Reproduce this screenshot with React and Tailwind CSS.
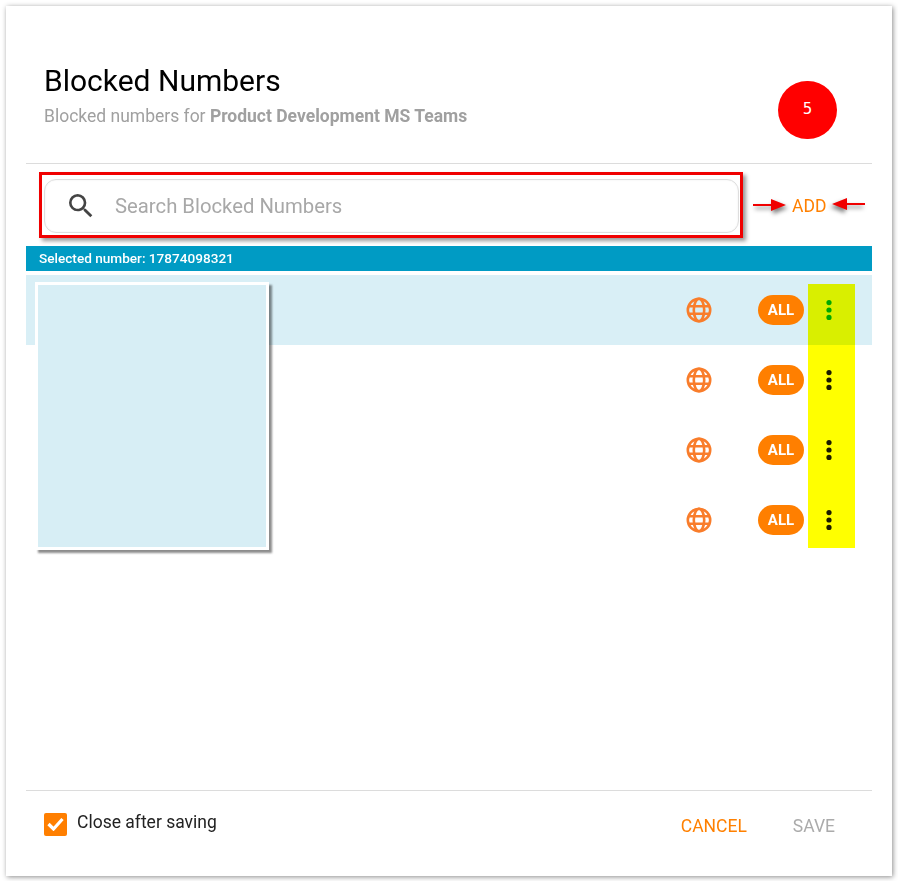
import React from "react";
import { MdSearch } from "react-icons/md";

function Globe() {
  return (
    <svg width="26" height="26" viewBox="0 0 26 26" fill="none" stroke="#F97D2B" strokeWidth="2.6">
      <circle cx="13" cy="13" r="11.2" />
      <ellipse cx="13" cy="13" rx="5.2" ry="11.2" />
      <path d="M2.6 9.2h20.8M2.6 16.8h20.8" />
    </svg>
  );
}

function Dots({ color }) {
  return (
    <svg width="6" height="20" viewBox="0 0 6 20" fill={color}>
      <circle cx="3" cy="2.6" r="2.6" />
      <circle cx="3" cy="10" r="2.6" />
      <circle cx="3" cy="17.4" r="2.6" />
    </svg>
  );
}

function Row({ selected }) {
  return (
    <div className={`flex h-[70px] items-center pl-[660px] ${selected ? "bg-[#D9EFF6]" : ""}`}>
      <div className="flex w-[26px] justify-center"><Globe /></div>
      <div className="ml-[46px] flex h-[30px] w-[46px] items-center justify-center rounded-full bg-[#FF7F00] text-[15px] font-bold text-white">ALL</div>
      <div className="ml-[22px] flex w-[6px] justify-center"><Dots color={selected ? "#00A800" : "#1a1a1a"} /></div>
    </div>
  );
}

function Arrow({ flip, className }) {
  return (
    <svg width="36" height="14" viewBox="0 0 36 14" className={`absolute drop-shadow-[2px_3px_2px_rgba(0,0,0,0.5)] ${className}`} style={flip ? { transform: "scaleX(-1)" } : undefined}>
      <path d="M0 6h18V1L33 7l-15 6V8H0z" fill="#F00000" />
    </svg>
  );
}

export default function App() {
  return (
    <div className="h-[881px] w-[898px] bg-white pl-[6px] pt-[6px] font-['Roboto',sans-serif]">
      <div className="relative flex h-[870px] w-[886px] flex-col bg-white shadow-[1px_1px_5px_rgba(0,0,0,0.45)]">
        <header className="h-[157px] px-[38px] pt-[57px]">
          <h1 className="text-[30px] leading-[36px] text-black">Blocked Numbers</h1>
          <p className="mt-[5px] text-[17.5px] leading-[24px] text-[#A0A0A0]">
            Blocked numbers for <b className="font-bold">Product Development MS Teams</b>
          </p>
        </header>

        <div className="mx-[20px] border-t border-[#DCDCDC]" />

        <div className="mx-[20px] flex h-[82px] items-center pt-[2px]">
          <div className="ml-[18px] flex h-[54px] w-[695px] items-center rounded-[12px] border border-[#DEDEDE] pl-[20px] shadow-[inset_0_0_2px_rgba(0,0,0,0.08)]">
            <MdSearch size={32} className="text-[#444]" />
            <span className="ml-[18px] text-[20.3px] text-[#A8A8A8]">Search Blocked Numbers</span>
          </div>
          <span className="ml-[53px] text-[17.5px] text-[#FF8000]">ADD</span>
        </div>

        <div className="mx-[20px] flex h-[25px] items-center bg-[#009BC4] pl-[13px] text-[13.6px] font-medium text-white">
          Selected number: 17874098321
        </div>

        <div className="mx-[20px] mt-[4px] flex-1">
          <Row selected />
          <Row />
          <Row />
          <Row />
        </div>

        <div className="mx-[20px] flex h-[86px] items-start border-t border-[#DCDCDC]">
          <label className="ml-[18px] mt-[20px] flex items-center">
            <span className="flex h-[23px] w-[23px] items-center justify-center rounded-[2px] bg-[#FF7F00]">
              <svg width="17" height="14" viewBox="0 0 17 14" fill="none" stroke="#fff" strokeWidth="3.2">
                <path d="M1.5 7l5 5L15.5 2" />
              </svg>
            </span>
            <span className="ml-[10px] -translate-y-[2px] text-[17.5px] text-[#222]">Close after saving</span>
          </label>
          <div className="ml-auto mr-[37px] mt-[24px] flex gap-[46px] text-[17.5px] leading-[22px]">
            <span className="text-[#FF8000]">CANCEL</span>
            <span className="text-[#ABABAB]">SAVE</span>
          </div>
        </div>

        {/* annotations drawn over the dialog */}
        <div className="absolute left-[33px] top-[166px] h-[66px] w-[704px] border-[3px] border-[#F00000] shadow-[3px_3px_4px_rgba(0,0,0,0.4)]" />
        <Arrow className="left-[747px] top-[192px]" />
        <Arrow flip className="left-[823px] top-[191px]" />
        <div className="absolute left-[29px] top-[276px] h-[268px] w-[234px] border-[3px] border-white bg-[#D7EEF5] shadow-[3px_3px_2px_rgba(0,0,0,0.45)]" />
        <div className="absolute left-[802px] top-[278px] h-[264px] w-[47px] bg-[#FFFF00] mix-blend-multiply" />
        <div className="absolute left-[772px] top-[75px] flex h-[58px] w-[59px] items-center justify-center rounded-full bg-[#FF0000] pb-[1px] font-['DejaVu_Sans',sans-serif] text-[15px] text-white">5</div>
      </div>
    </div>
  );
}
